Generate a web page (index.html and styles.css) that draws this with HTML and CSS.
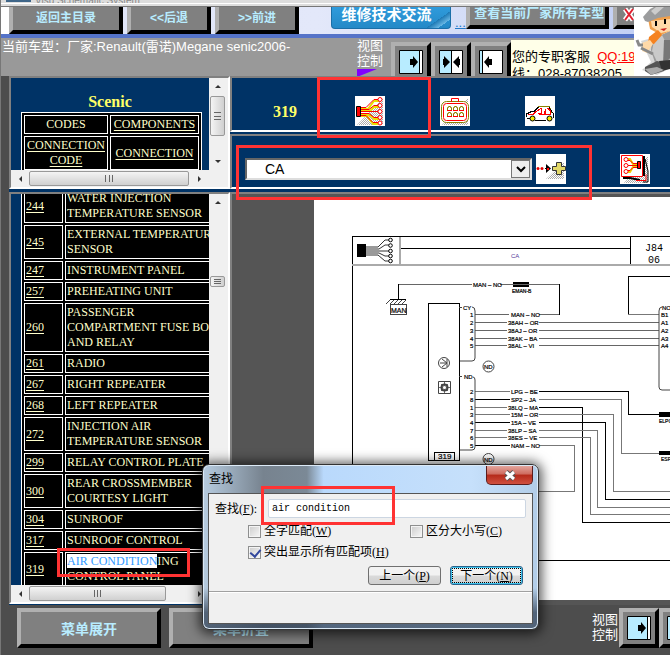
FILE: index.html
```html
<!DOCTYPE html>
<html lang="zh-CN">
<head>
<meta charset="utf-8">
<title>Scenic</title>
<link rel="stylesheet" href="styles.css">
</head>
<body>
<svg class="defs" aria-hidden="true">
  <defs>
    <pattern id="dither" width="2" height="2" patternUnits="userSpaceOnUse"><path fill="#aaa" d="M0 0h1v1H0zM1 1h1v1H1z"/></pattern>
    <symbol id="view-right" viewBox="0 0 24 24"><path fill="#b8ecff" stroke="#000" d="M.5.5h23v23H.5z"/><path fill="#fff" d="M21 1h2v22h-2z"/><path d="M20 1h1v22h-1zM11 9h3V6l5 6-5 6v-3h-3z"/></symbol>
    <symbol id="view-split" viewBox="0 0 24 24"><path fill="#fff" stroke="#000" d="M.5.5h23v23H.5z"/><path fill="#b8ecff" d="M1 1h11v22H1z"/><path d="M12 1h1v22h-1zM4 9h1V6l6 6-6 6v-3H4zM21 9h-1V6l-6 6 6 6v-3h1z"/></symbol>
    <symbol id="view-left" viewBox="0 0 24 24"><path fill="#fff" stroke="#000" d="M.5.5h23v23H.5z"/><path fill="#b8ecff" d="M1 1h2v22H1z"/><path d="M3 1h1v22H3zM13 9h-3V6l-5 6 5 6v-3h3z"/></symbol>
  </defs>
</svg>
<div class="page">
  <div class="window-strip"><span class="window-icon"></span><span class="window-name">Visu Schematic System</span></div>
  <header class="header">
    <div class="header-main">
      <nav class="toolbar">
        <button class="bevel tool tool-home">返回主目录</button>
        <button class="bevel tool">&lt;&lt;后退</button>
        <button class="bevel tool">&gt;&gt;前进</button>
        <button class="forum">维修技术交流</button>
        <a class="dots" href="#">...</a>
        <button class="bevel tool tool-all">查看当前厂家所有车型</button>
        <button class="bevel tool tool-close" aria-label="关闭"><svg width="12" height="16" viewBox="0 0 12 16"><path d="M2 2l8 11M10 2L2 13" stroke="#fff" stroke-width="5"/><path d="M2 2l8 11M10 2L2 13" stroke="#e02030" stroke-width="2"/></svg></button>
      </nav>
      <div class="status">
        <p class="model">当前车型：厂家:Renault(雷诺)Megane senic2006-</p>
        <div class="view-label"><span>视图</span><span>控制</span><i class="triangle"></i></div>
        <button class="bevel view" aria-label="右"><svg width="24" height="24"><use href="#view-right"/></svg></button>
        <button class="bevel view" aria-label="中"><svg width="24" height="24"><use href="#view-split"/></svg></button>
        <button class="bevel view" aria-label="左"><svg width="24" height="24"><use href="#view-left"/></svg></button>
        <div class="service">您的专职客服 &nbsp;<a href="#">QQ:19</a><br>线：028-87038205</div>
      </div>
    </div>
    <svg class="mascot" width="36" height="69" viewBox="0 0 36 69" aria-hidden="true">
      <path fill="#999" opacity=".4" d="M7 34l10 21-9 8 15 5 13-7V26z"/>
      <path fill="#9b9b9b" d="M18 32l18-8v28l-6 9-8-2-5-16z"/>
      <path fill="#c9c9c9" d="M20 34l8-6 4 8-2 19-6 2-6-13z"/>
      <path fill="#777" d="M30 33h6v18l-7 7z"/>
      <path fill="#f0a04c" d="M14 12l22-4v16l-9 4-11-6z"/>
      <path fill="#ffd9a8" d="M17 14l19-2v12l-9 2-9-6z"/>
      <path fill="#9b9c9d" d="M9 10L16 2l4-2h16v9l-12 2-10 4-3-1z"/>
      <path fill="#ccc" d="M17 4l5-4h8l-9 8z"/>
      <path d="M21 14h2v5h-2zM30 12h2v5h-2z"/>
      <path fill="#c22" d="M26 22l7-1-3 3z"/>
      <path fill="#f58220" d="M15 30l9-7 4 5-8 9-6-1z"/>
      <path fill="#ffd9a8" d="M8 36l8-3 3 4-6 9-5-2z"/>
      <path fill="none" stroke="#888" stroke-width="3" d="M3 33l2 5h4M7 41l12 6"/>
      <path fill="#555" d="M11 60l12-6 8 2-1 8-13 4-6-4z"/>
      <path fill="#333" d="M25 54l11-1v9l-8 2z"/>
      <path fill="#aaa" d="M11 62l12-2 7 3-13 5z"/>
    </svg>
  </header>

  <main class="main">
    <aside class="sidebar">
      <section class="frame frame-menu">
        <div class="pane menu-pane">
          <h1 class="heading">Scenic</h1>
          <table class="grid menu">
            <tr><td>CODES</td><td><a href="#">COMPONENTS</a></td></tr>
            <tr><td><a href="#">CONNECTION CODE</a></td><td><a href="#">CONNECTION</a></td></tr>
          </table>
        </div>
        <div class="vbar"><i class="arrow up"></i><i class="thumb vthumb"></i><i class="arrow down"></i></div>
        <div class="hbar"><i class="arrow left"></i><i class="thumb hthumb hthumb-long"></i><i class="arrow right"></i></div>
      </section>
      <section class="frame frame-list">
        <div class="pane list-pane">
          <table class="grid list">
            <tr><td><a href="#">244</a></td><td>WATER INJECTION<br>TEMPERATURE SENSOR</td></tr>
            <tr><td><a href="#">245</a></td><td>EXTERNAL TEMPERATURE<br>SENSOR</td></tr>
            <tr><td><a href="#">247</a></td><td>INSTRUMENT PANEL</td></tr>
            <tr><td><a href="#">257</a></td><td>PREHEATING UNIT</td></tr>
            <tr><td><a href="#">260</a></td><td>PASSENGER<br>COMPARTMENT FUSE BOX<br>AND RELAY</td></tr>
            <tr><td><a href="#">261</a></td><td>RADIO</td></tr>
            <tr><td><a href="#">267</a></td><td>RIGHT REPEATER</td></tr>
            <tr><td><a href="#">268</a></td><td>LEFT REPEATER</td></tr>
            <tr><td><a href="#">272</a></td><td>INJECTION AIR<br>TEMPERATURE SENSOR</td></tr>
            <tr><td><a href="#">299</a></td><td>RELAY CONTROL PLATE</td></tr>
            <tr><td><a href="#">300</a></td><td>REAR CROSSMEMBER<br>COURTESY LIGHT</td></tr>
            <tr><td><a href="#">304</a></td><td>SUNROOF</td></tr>
            <tr><td><a href="#">317</a></td><td>SUNROOF CONTROL</td></tr>
            <tr><td><a href="#">319</a></td><td><mark>AIR CONDITION</mark>ING<br>CONTROL PANEL</td></tr>
          </table>
        </div>
        <div class="vbar"><i class="arrow up"></i><i class="thumb vthumb vthumb-short"></i></div>
        <div class="hbar"><i class="arrow left"></i><i class="thumb hthumb"></i><i class="arrow right"></i></div>
      </section>
    </aside>

    <div class="content">
      <section class="frame tabs">
        <strong class="heading code">319</strong>
        <button class="icon" aria-label="线路图"><svg width="30" height="30" viewBox="0 0 30 30" fill="none"><path fill="url(#dither)" d="M2 29L28 2v27z"/><g stroke="#e8e000" stroke-width="2"><path d="M6 13h7l6-8h5M6 15h9l4-4h5M6 19h9l4 4h5M6 20h6l6 8h5"/></g><g stroke="#f00"><path d="M6 11.500h5l8-8h4M6 13.500h8l5-4h4M6 15.500h17M6 17.500h8l5 4h4M6 19.500h5l7 7h5"/><g fill="#fff"><circle cx="25" cy="3.500" r="2"/><circle cx="25" cy="9.500" r="2"/><circle cx="25" cy="15.500" r="2"/><circle cx="25" cy="21.500" r="2"/><circle cx="25" cy="27" r="2"/></g></g><path fill="#f00" stroke="#000" d="M1.500 10.500h4v10h-4z"/></svg></button>
        <button class="icon" aria-label="插接器"><svg width="30" height="30" viewBox="0 0 30 30" fill="none"><path fill="url(#dither)" d="M2 29L28 2v27z"/><rect x="1.500" y="5.500" width="27" height="21" rx="5" stroke="#8a8000" fill="#fff"/><rect x="3.500" y="7.500" width="23" height="17" rx="3" stroke="#f00"/><path stroke="#f00" fill="#fff" d="M11.500 6V2.500h7V6"/><path stroke="#8a8000" d="M12 5.500h6M7.500 14v-2.500h1v-1h2v1h1V14M13.500 14v-2.500h1v-1h2v1h1V14M19.500 14v-2.500h1v-1h2v1h1V14M7.500 20v-2.500h1v-1h2v1h1V20M13.500 20v-2.500h1v-1h2v1h1V20M19.500 20v-2.500h1v-1h2v1h1V20"/><path stroke="#f00" d="M7 14.500h5M13 14.500h5M19 14.500h5M7 20.500h5M13 20.500h5M19 20.500h5"/></svg></button>
        <button class="icon" aria-label="车辆位置"><svg width="30" height="30" viewBox="0 0 30 30" fill="none" shape-rendering="crispEdges"><path stroke="#8a8000" d="M13 10.500h11l3 6"/><path stroke="#000" d="M1.500 21v-3l4-2 4-1 4-4M24 11l3 5 1 1v5M10 24.500h11M2 22.500h3"/><path stroke="#f00" d="M3 18.500h5l3-3 5-3v5h-3M14 18.500h5v-4M16.500 13v5M20.500 13v5h5v-3l-3-3"/><g fill="#f4e800" stroke="#000" shape-rendering="auto"><circle cx="7.500" cy="22.500" r="2.500"/><circle cx="24.500" cy="22.500" r="2.500"/></g></svg></button>
      </section>
      <section class="frame picker">
        <div class="combo"><select aria-label="线路"><option>CA</option></select><span class="combo-arrow"><svg width="10" height="7" viewBox="0 0 10 7"><path fill="none" stroke="#000" stroke-width="2" d="M1 1l4 4 4-4"/></svg></span></div>
        <button class="icon icon-add" aria-label="添加"><svg width="30" height="30" viewBox="0 0 30 30" fill="none"><path fill="url(#dither)" d="M10 25L28 8v17z"/><g fill="#e00000"><circle cx="2" cy="14.500" r="1.500"/><circle cx="6" cy="14.500" r="1.500"/></g><path fill="#000" d="M9 14h1v-4l5 4.500-5 4.500v-4H9z"/><path fill="#f00" d="M11 14h2v2h-2z"/><path fill="#e2d868" stroke="#333" d="M20.500 8.500h5v4h4v4h-4v4h-5v-4h-4v-4h4z"/></svg></button>
        <button class="icon icon-book" aria-label="图册"><svg width="30" height="30" viewBox="0 0 30 30" fill="none"><path fill="url(#dither)" d="M4 29L28 2v27z"/><path stroke="#000" stroke-width="2" d="M24 2v20M3 24h7l10 2"/><path stroke="#000" d="M25 5l3 12v11h-5"/><path stroke="#f00" d="M16 26.500h10v-6"/><path fill="#fff" stroke="#f00" d="M1.500 1.500h21v21h-21z"/><path stroke="#f0d000" stroke-width="2" d="M8 5h2l3 5h4M8 18h2l3-5h4"/><path stroke="#f00" d="M8 6.500h2l3 3h5M8 11.500h10M8 16.500h2l3-3h5"/><g fill="#fff" stroke="#f00"><circle cx="6" cy="5.500" r="2"/><circle cx="6" cy="11.500" r="2"/><circle cx="6" cy="17.500" r="2"/></g><path fill="#f00" stroke="#000" d="M17.500 7.500h3v7h-3z"/></svg></button>
      </section>
      <section class="frame viewer">
        <svg class="sheet" role="img" aria-label="CA">
          <g transform="translate(-314 -197)" fill="none" stroke="#000" shape-rendering="crispEdges">
            <path d="M670 236.500H352.500V560.500H670M400 248.500H630.500M630.500 237v28"/>
            <path stroke="#aaa" stroke-width="2" d="M352 265H670M400 237v28"/>
            <g shape-rendering="auto"><path stroke-width=".8" d="M366 247h12l7-7h4M366 249h13l6-4h4M366 251h23M366 253h13l6 3h4M366 255h12l7 6h4"/><g fill="#fff"><circle cx="390.500" cy="240" r="1.800"/><circle cx="390.500" cy="245.500" r="1.800"/><circle cx="390.500" cy="251" r="1.800"/><circle cx="390.500" cy="256" r="1.800"/><circle cx="390.500" cy="261" r="1.800"/></g></g>
            <path fill="#000" stroke="none" d="M357 244h9v13h-9zM513 282h16v5h-16zM659 412h11v5h-11zM659 451h11v4h-11z"/>
            <path stroke="#666" d="M398 284.500H472M500 284.500H559M539 314.500H559M475 314.500H509M475 322.500H507M539 322.500H659M475 330.500H507M539 330.500H659M475 338.500H507M539 338.500H659M475 345.500H507M539 345.500H659"/>
            <path d="M398.500 284v15M559.500 284v31M390 299.500h16M428.500 303.500h31v157h-31zM670 276.500H628.500V314.500M434.500 460v-8h20v8"/>
            <path stroke="#777" d="M628 314.500h31M475 391.500h35M475 407.500h32M475 414.500h35M475 430.500h32M475 437.500h32"/>
            <path d="M475 399.500h35M475 422.500h35M475 445.500h35M539 391.500h89.500v23H659M539 407.500h43.500v115H670M539 422.500h66.500v76.500H670"/>
            <path stroke="#777" d="M539 399.500h82.500v53.500H659M539 414.500h74.500v77H670M539 430.500h58.500v76.500H670M539 437.500h51.500v77H670M539 445.500h35.500v46H539"/>
            <g shape-rendering="auto" stroke="#444"><path d="M459 307.500h3M472 307q3 0 3 4V358q0 3-3 3H460M459 376.500h3M473 377q2 0 2 3v67q0 3-3 3H460M662 307q-3 0-3 4v76q0 3 3 3h8M386 304l4-4M390 304l4-4M394 304l4-4M398 304l4-4M402 304l4-4"/><circle cx="444" cy="363" r="5.500"/><path d="M440 363h6M442 359l5 4-5 4M447 359v8M438.500 381.500h12v12h-12z"/><circle cx="444.500" cy="387.500" r="3" stroke-width="2"/><path d="M444.500 382v11M439 387.500h11M441 384l7 7M448 384l-7 7" stroke-width=".8"/><circle cx="444.500" cy="387.500" r="1.500" fill="#fff" stroke="none"/><circle cx="488.500" cy="366.500" r="5.500"/><circle cx="488.500" cy="459" r="5.500"/></g>
            <path stroke="#444" d="M390.500 304.500h16v10h-16z"/>
          </g>
          <g class="tag" transform="translate(-314 -197)">
            <text x="391" y="313" class="tag-mid">MAN</text><text x="473" y="287">MAN – NO</text><text x="512" y="293" class="tag-small">EMAN-B</text>
            <text x="463" y="310">CY</text><text x="470" y="317">1</text><text x="470" y="325">2</text><text x="470" y="333">3</text><text x="470" y="341">4</text><text x="470" y="348">5</text>
            <text x="511" y="317">MAN – NO</text><text x="508" y="325">38AH – OR</text><text x="508" y="333">38AJ – OR</text><text x="508" y="341">38AK – BA</text><text x="508" y="348">38AL – VI</text>
            <text x="464" y="379">ND</text><text x="470" y="394">2</text><text x="470" y="402">8</text><text x="470" y="410">1</text><text x="470" y="417">3</text><text x="470" y="425">4</text><text x="470" y="433">7</text><text x="470" y="440">6</text><text x="470" y="448">5</text>
            <text x="511" y="394">LPG – BE</text><text x="511" y="402">SP2 – JA</text><text x="508" y="410">38LQ – MA</text><text x="511" y="417">15M – OR</text><text x="511" y="425">15A – VE</text><text x="508" y="433">38LP – SA</text><text x="508" y="440">38ES – VE</text><text x="511" y="448">NAM – NO</text>
            <text x="484" y="369">ND</text><text x="484" y="462">ND</text><text x="438" y="459" class="tag-code">319</text>
            <text x="662" y="310">NO</text><text x="661" y="317">B1</text><text x="661" y="325">A1</text><text x="661" y="333">A2</text><text x="661" y="341">A3</text><text x="661" y="348">A4</text>
            <text x="659" y="423" class="tag-small">ELPG</text><text x="661" y="461" class="tag-small">ESP</text>
            <text x="511" y="258" class="tag-ca">CA</text><text x="645" y="251" class="tag-big">J84</text><text x="648" y="263" class="tag-big">06</text>
          </g>
        </svg>
      </section>
    </div>
  </main>

  <footer class="footer">
    <button class="bevel wide">菜单展开</button>
    <button class="bevel wide">菜单折叠</button>
    <div class="footer-view">
      <div class="view-label"><span>视图</span><span>控制</span></div>
      <button class="bevel view" aria-label="右"><svg width="24" height="24"><use href="#view-right"/></svg></button>
      <button class="bevel view" aria-label="中"><svg width="24" height="24"><use href="#view-split"/></svg></button>
    </div>
  </footer>

  <form class="dialog" onsubmit="return false">
    <div class="dialog-title"><span>查找</span><button type="button" class="dialog-close" aria-label="关闭"><svg width="12" height="11" viewBox="0 0 12 11"><path d="M2 2l8 7M10 2L2 9" stroke="#555" stroke-width="5"/><path d="M2 2l8 7M10 2L2 9" stroke="#fff" stroke-width="3"/></svg></button></div>
    <div class="dialog-body">
      <div class="find-row"><label for="find">查找(<u>F</u>):</label><input id="find" type="text" value="air condition"></div>
      <div class="checks">
        <label><input type="checkbox">全字匹配(<u>W</u>)</label>
        <label><input type="checkbox">区分大小写(<u>C</u>)</label>
        <label><input type="checkbox" checked>突出显示所有匹配项(<u>H</u>)</label>
      </div>
      <div class="actions"><button type="button">上一个(<u>P</u>)</button><button type="button" class="primary">下一个(<u>N</u>)</button></div>
      <div class="dialog-status"></div>
    </div>
  </form>

  <div class="note note-tab"></div>
  <div class="note note-picker"></div>
  <div class="note note-find"></div>
  <div class="note note-result"></div>
</div>
</body>
</html>
```
FILE: styles.css
```css
* { box-sizing: border-box; }
body { margin: 0; background: #fff; font-family: "Liberation Sans", "Noto Sans CJK SC", sans-serif; font-size: 13px; overflow: hidden; }
button { font: inherit; padding: 0; margin: 0; }
svg { display: block; flex: none; }
.defs { position: absolute; width: 0; height: 0; }
.page { position: relative; border-left: 1px solid #777; }

.window-strip { display: flex; gap: 4px; height: 7px; padding-left: 5px; overflow: hidden; background: linear-gradient(#ddd 3px, #fff 3px, #fff 4px, #ddd 4px, #ddd 6px, #777 6px); }
.window-icon { width: 25px; height: 2px; background: #3f6689; }
.window-name { height: 3px; overflow: hidden; font-size: 10px; line-height: 1px; color: #888; white-space: nowrap; }

.header { display: grid; grid-template-columns: minmax(0, 1fr) 36px; height: 69px; overflow: hidden; background: #fff; }
.header-main { min-width: 0; overflow: hidden; }
.toolbar { display: flex; align-items: flex-start; height: 31px; overflow: hidden; padding-left: 8px; border-bottom: 4px solid #5573c8; background: linear-gradient(90deg, #fff 8px, #dfe4f7 8px, #e3e8fa 50%, #c3d0f4); }
.bevel { flex: none; border: 4px solid; border-color: #b0b0b0 #000 #000 #b0b0b0; background: #808080; color: #b8ecff; font-weight: bold; white-space: nowrap; }
.tool { width: 84px; height: 27px; margin-right: 4px; padding-bottom: 2px; border-top: 0; font-size: 12px; line-height: 20px; }
.tool-home { width: 114px; }
.forum { flex: none; width: 120px; height: 22px; margin-left: 28px; padding: 0 9px 6px 0; border: 1px solid #1a6fa8; border-top: 0; border-radius: 0 0 4px 4px; background: linear-gradient(145deg, transparent 84%, #1c78b4 84%, #69b7e4 92%, transparent 92%), linear-gradient(#2f9bdc, #2489c7); color: #fff; font-size: 15px; font-weight: bold; line-height: 14px; }
.dots { width: 14px; margin: 8px 0 0 4px; color: #2479c8; line-height: 16px; }
.tool-all { width: 143px; height: 22px; padding: 0 0 6px 4px; font-size: 13px; line-height: 12px; }
.tool-close { height: 22px; width: 40px; padding-left: 6px; overflow: hidden; }

.status { display: flex; height: 38px; overflow: hidden; background: #999; color: #fff; }
.model { flex: 1; margin: 0 0 0 1px; line-height: 17px; white-space: nowrap; }
.view-label { display: flex; flex-direction: column; width: 34px; font-size: 13px; line-height: 15px; }
.triangle { margin-top: 1px; border-top: 8px solid #8000ff; border-right: 20px solid transparent; width: 0; }
.view { display: grid; place-items: center; width: 40px; height: 40px; }
.status .view { margin-top: 4px; }
.service { width: 123px; height: 36px; margin-top: 2px; padding: 8px 0 0 1px; background: #ffffe8; color: #000; line-height: 17px; white-space: nowrap; overflow: hidden; }
.service a { color: #f00; }

.main { display: grid; grid-template-columns: 221px minmax(0, 1fr); padding-left: 8px; background: #4d4d4d; }
.frame { border: 2px solid; border-color: #808080 #fff #fff #808080; background: #036; }
.sidebar, .content { min-width: 0; display: flex; flex-direction: column; background: #036; }
.sidebar .frame { display: grid; grid-template-columns: minmax(0, 1fr) 19px; grid-template-rows: minmax(0, 1fr) 17px; }
.frame-menu { height: 113px; margin-bottom: 3px; }
.frame-list { height: 412px; }
.pane { overflow: hidden; }
.menu-pane { padding: 14px 0 0 10px; }
.list-pane { padding-left: 10px; }
.heading { margin: 0; color: #ff6; font-family: "Liberation Serif", serif; font-size: 16px; line-height: 20px; font-weight: bold; }
h1.heading { width: 178px; text-align: center; }
.grid { table-layout: fixed; border: 1px solid #fff; border-collapse: separate; border-spacing: 2px; background: #000; color: #ffc; font-family: "Liberation Serif", serif; font-size: 12px; line-height: 15px; }
.grid td { border: 1px solid #fff; padding: 1px; overflow: hidden; }
.grid a { color: #ffc; text-underline-offset: 2px; }
.menu { width: 181px; text-align: center; }
.menu td:first-child { width: 84px; }
.list { width: 260px; margin-top: -8px; white-space: nowrap; }
.list td:first-child { width: 39px; }
mark { background: #fff; color: #39f; }

.vbar, .hbar { display: flex; align-items: center; background: #f0f0f0; }
.vbar { flex-direction: column; padding: 7px 2px 7px 0; }
.hbar { grid-column: 1 / -1; padding: 0 24px 0 5px; }
.arrow { width: 0; height: 0; border: 3px solid transparent; }
.up { border-bottom-color: #333; border-top: 0; margin-bottom: 8px; }
.down { border-top-color: #333; border-bottom: 0; margin-top: auto; }
.left { border-right-color: #333; margin-right: 7px; }
.right { border-left-color: #333; margin-left: auto; }
.thumb { display: block; border: 1px solid #999; border-radius: 2px; }
.vthumb { width: 15px; height: 40px; background: linear-gradient(#666, #666) 50% 40% / 7px 1px no-repeat, linear-gradient(#666, #666) 50% 50% / 7px 1px no-repeat, linear-gradient(#666, #666) 50% 60% / 7px 1px no-repeat, linear-gradient(90deg, #f4f4f4, #d0d0d0); }
.vthumb-short { height: 11px; margin-top: 64px; background-position: 50% 20%, 50% 50%, 50% 80%, 0 0; }
.hthumb { width: 137px; height: 15px; background: linear-gradient(#666, #666) 48% 50% / 1px 7px no-repeat, linear-gradient(#666, #666) 50% 50% / 1px 7px no-repeat, linear-gradient(#666, #666) 52% 50% / 1px 7px no-repeat, linear-gradient(#f4f4f4, #d0d0d0); }
.hthumb-long { width: 160px; }

.content .frame { display: flex; border-right: 0; }
.tabs { height: 56px; margin-bottom: 2px; padding: 18px 0 0 41px; }
.code { width: 82px; line-height: 32px; }
.icon { flex: none; width: 30px; height: 30px; margin-right: 55px; border: 0; background: #fff; }
.picker { height: 55px; margin-bottom: 3px; padding: 18px 0 0 13px; }
.combo { display: grid; width: 287px; height: 22px; margin-top: 4px; border: 2px solid; border-color: #666 #ddd #ddd #666; background: #fff; }
.combo select { grid-area: 1 / 1; appearance: none; width: 100%; margin: 0; padding: 0 0 0 18px; border: 0; border-radius: 0; background: #fff; color: #000; font: 14px "Liberation Sans", sans-serif; }
.combo-arrow { grid-area: 1 / 1; justify-self: end; display: grid; place-items: center; width: 19px; border: 1px solid #777; background: #eee; pointer-events: none; }
.icon-add { margin: 0 0 0 4px; }
.icon-book { margin: 0 0 0 54px; }
.content .viewer { height: 413px; padding: 3px 0 4px 82px; border-bottom: 0; background: #555; }
.sheet { width: 100%; height: 403px; background: #fff; flex: 1; }
.tag { font: 6px "Liberation Sans", sans-serif; fill: #000; stroke: #000; stroke-width: .2px; }
.tag-small { font-size: 5px; }
.tag-mid { font-size: 7px; }
.tag-code { font-size: 8px; }
.tag-ca { fill: #55389a; stroke: none; }
.tag-big { font: 10px "Liberation Mono", monospace; stroke: none; }

.footer { display: flex; gap: 8px; height: 50px; padding: 3px 0 0 16px; overflow: hidden; background: #4d4d4d; color: #fff; }
.wide { width: 144px; height: 40px; font-size: 14px; }
.footer-view { display: flex; flex: none; width: 78px; margin-left: auto; }
.footer-view .view-label { width: 27px; padding-top: 4px; flex: none; }

.dialog { position: absolute; left: 201px; top: 464px; width: 337px; padding: 1px 5px 5px; border: 1px solid #333; border-radius: 7px; background: linear-gradient(transparent 75%, rgba(50, 65, 85, .75) 90%), linear-gradient(90deg, #b7cce0, #77838f 18%, #7b8996 31%, #b9d9fc 36%, #c6e0fb 80%, #b2cde8); box-shadow: 0 1px 12px 3px rgba(0, 0, 0, .65), inset 0 0 0 1px #dceaf7; font-family: "Liberation Serif", "Noto Sans CJK SC", serif; font-size: 12px; color: #000; }
.dialog-title { display: flex; justify-content: space-between; height: 27px; padding-left: 1px; line-height: 26px; }
.dialog-close { display: grid; place-items: center; width: 47px; height: 19px; border: 1px solid #5b1c1c; border-top: 0; border-radius: 0 0 5px 5px; background: linear-gradient(#e3a59d, #ce6b5e 45%, #b52a1a 50%, #d0503f); }
.dialog-body { border: 1px solid #555; background: #f0f0f0; }
.find-row { display: flex; justify-content: space-between; align-items: center; padding: 5px 6px 0 6px; line-height: 18px; }
.find-row input { width: 258px; height: 19px; padding: 0 3px; border: 1px solid #ccd6e2; border-radius: 2px; background: #fff; font: 10px "Liberation Mono", monospace; color: #000; }
.checks { display: grid; grid-template-columns: 162px 1fr; gap: 3px 0; padding: 4px 0 0 39px; line-height: 18px; }
.checks label { display: flex; align-items: center; white-space: nowrap; }
.checks label:last-child { grid-column: 1 / -1; }
.checks input { appearance: none; flex: none; width: 13px; height: 13px; margin: 0 3px 0 0; border: 1px solid #8e8f8f; background: linear-gradient(135deg, #ccc, #f8f8f8); box-shadow: inset 0 0 0 1px #f4f4f4; }
.checks input:checked::before { content: ""; display: block; width: 5px; height: 8px; margin-left: 3px; border: solid #31479c; border-width: 0 2px 2px 0; transform: rotate(40deg); }
.actions { display: flex; justify-content: flex-end; gap: 9px; padding: 5px 9px 6px 0; }
.actions button { width: 73px; height: 19px; border: 1px solid #707070; border-radius: 3px; background: linear-gradient(#f2f2f2 48%, #dadada 52%, #cfcfcf); line-height: 16px; }
.actions .primary { border-color: #2c628b; box-shadow: inset 0 0 0 1px #3cc3ee; outline: 1px dotted #000; outline-offset: -3px; }
.dialog-status { height: 32px; border-top: 1px solid #a0a0a0; box-shadow: inset 0 1px #fff; }

.note { position: absolute; border: 3px solid #f33; pointer-events: none; }
.note-tab { left: 316px; top: 77px; width: 114px; height: 61px; }
.note-picker { left: 235px; top: 145px; width: 356px; height: 55px; }
.note-find { left: 260px; top: 486px; width: 134px; height: 39px; }
.note-result { left: 56px; top: 548px; width: 133px; height: 29px; }
```
